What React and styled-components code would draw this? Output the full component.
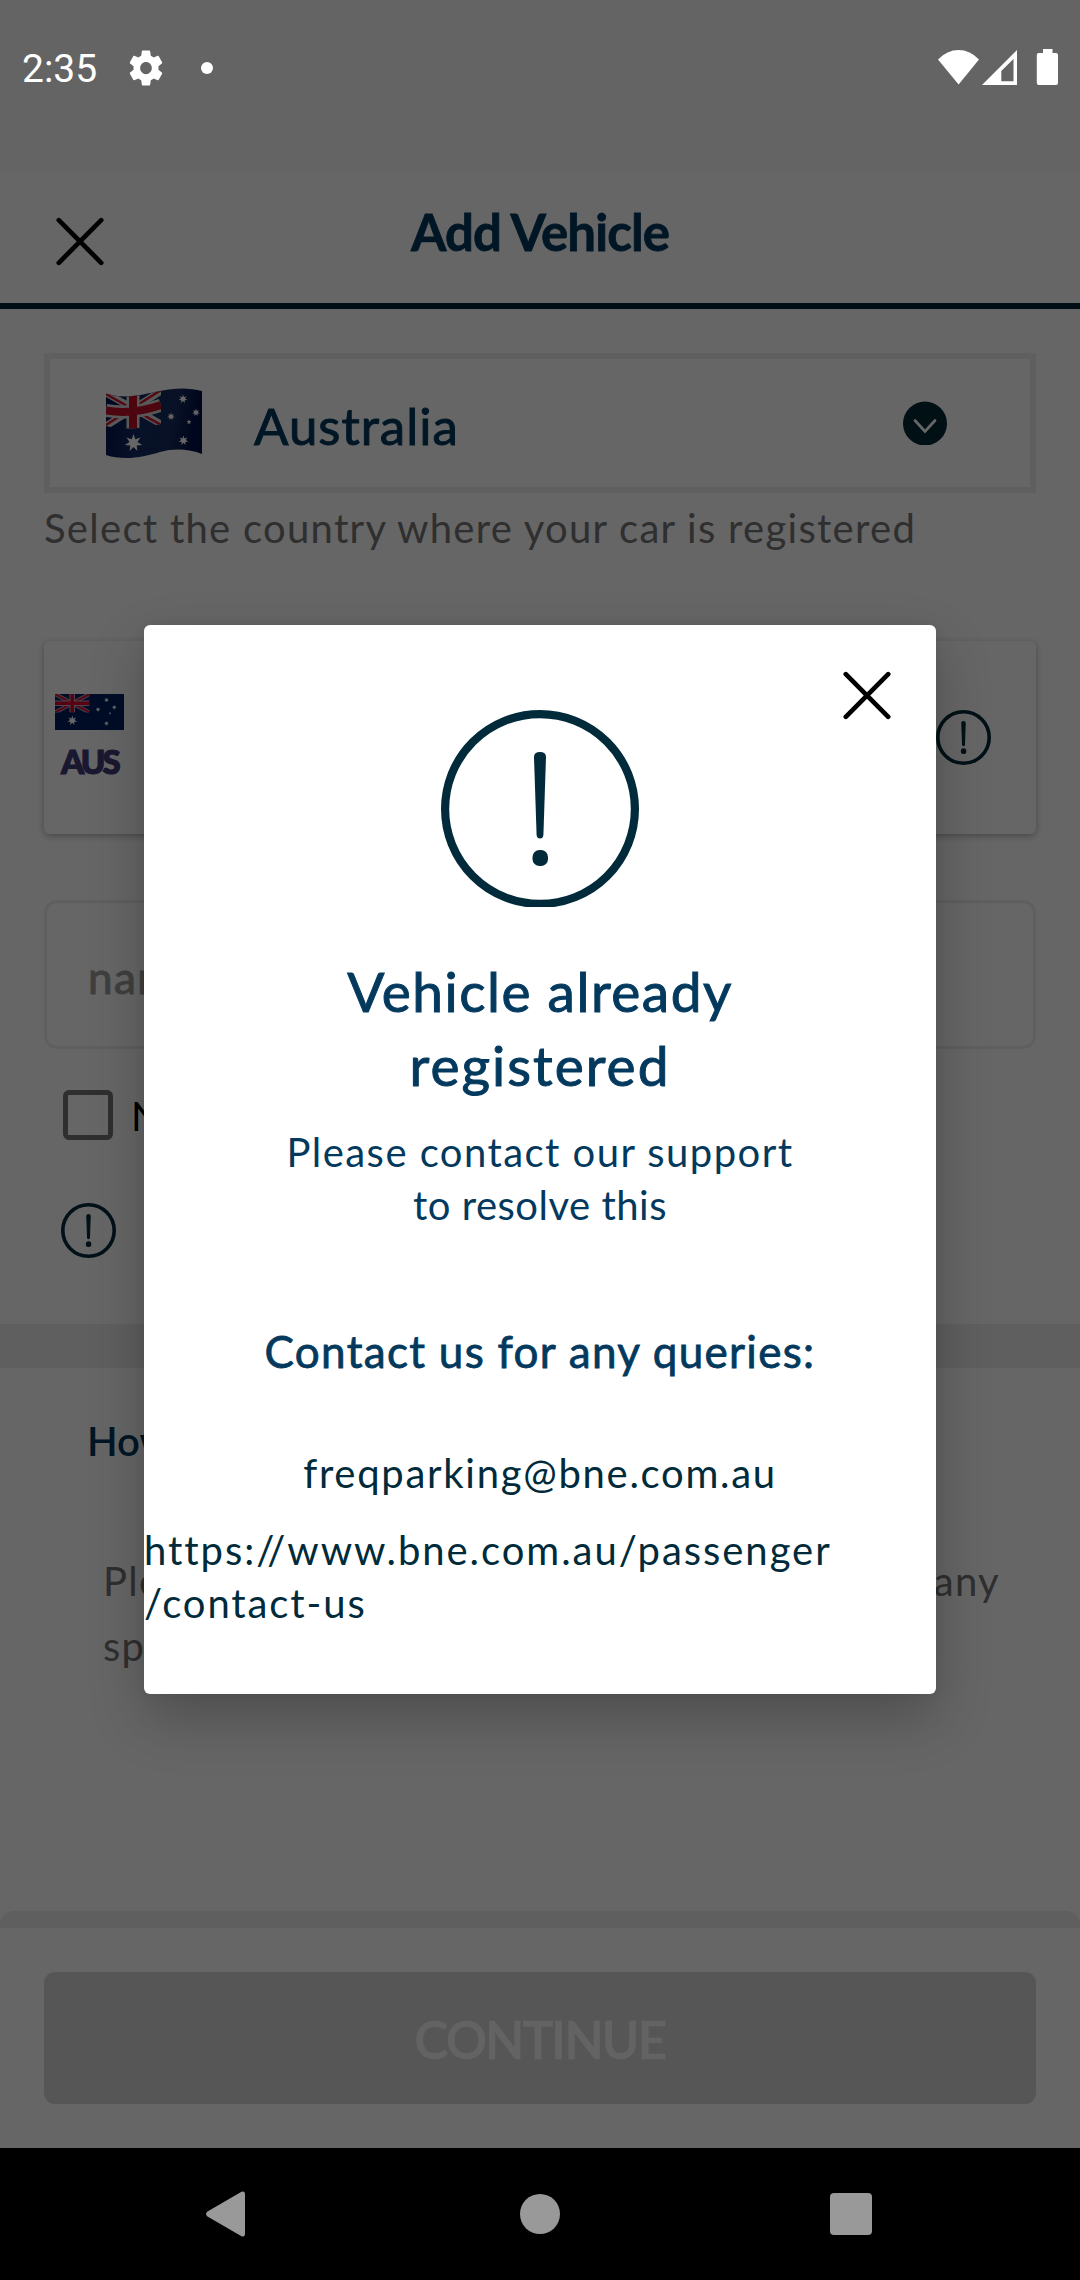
import React from "react";
import styled, { createGlobalStyle } from "styled-components";

const navy = "#04395e";
const ink = "#012b3a";
const line = "#eeeeee";
const muted = "#757575";

const GlobalStyle = createGlobalStyle`
  * { box-sizing: border-box; }
  body { margin: 0; background: #666; }
`;

const Text = styled.span`
  display: block;
  font-family: Lato, "Liberation Sans", sans-serif;
  font-size: ${(p) => p.$size || 40}px;
  font-weight: ${(p) => p.$weight || 400};
  line-height: ${(p) => p.$leading || 50}px;
  letter-spacing: ${(p) => p.$track || 0}px;
  -webkit-text-stroke: ${(p) => p.$stroke || 0}px;
  color: ${(p) => p.$color || navy};
  white-space: nowrap;
`;

const Screen = styled.div`
  position: relative;
  display: flex;
  flex-direction: column;
  width: 1080px;
  height: 2280px;
  overflow: hidden;
  background: #fff;
`;

const StatusBar = styled.header`
  display: flex;
  align-items: flex-start;
  height: 171px;
  padding: 49px 22px 0;
  background: #fafafa;
`;

const StatusIcons = styled.div`
  position: relative;
  z-index: 3;
  display: flex;
  flex: 1;
  align-items: center;
  height: 37px;
`;

const Clock = styled.span`
  width: 104px;
  padding-top: 4px;
  font: 400 39px/37px Roboto, sans-serif;
  color: #fff;
`;

const Dot = styled.i`
  width: 12px;
  height: 12px;
  margin-left: 35px;
  border-radius: 50%;
  background: #fff;
`;

const Signals = styled.svg`
  margin-left: auto;
`;

const TitleBar = styled.div`
  display: grid;
  grid-template-columns: 160px 1fr 160px;
  height: 138px;
  border-bottom: 6px solid #002639;
`;

const CloseSlot = styled.div`
  padding: 46px 0 0 56px;
`;

const TitleSlot = styled.div`
  display: flex;
  justify-content: center;
  padding-top: 31px;
`;

const Form = styled.main`
  display: flex;
  flex-direction: column;
  padding: 44px 44px 0;
`;

const CountrySelect = styled.div`
  display: flex;
  align-items: center;
  height: 140px;
  margin-bottom: 10px;
  padding: 0 83px 0 56px;
  border: 6px solid ${line};
`;

const CountryName = styled(Text)`
  flex: 1;
  margin: 6px 0 0 52px;
`;

const PlateCard = styled.div`
  display: flex;
  align-items: center;
  justify-content: space-between;
  height: 193px;
  margin-top: 88px;
  padding: 0 45px 0 11px;
  border-radius: 6px;
  box-shadow: 0 2px 7px rgba(0, 0, 0, 0.3);
`;

const PlateOrigin = styled.div`
  display: flex;
  flex-direction: column;
  align-items: center;
  gap: 14px;
  margin-top: -4px;
`;

const NameField = styled.div`
  display: flex;
  align-items: center;
  height: 149px;
  margin-top: 66px;
  padding: 4px 41px 0;
  border: 3px solid ${line};
  border-radius: 13px;
`;

const CheckRow = styled.div`
  display: flex;
  align-items: center;
  gap: 18px;
  height: 50px;
  margin: 41px 0 0 19px;
`;

const CheckBox = styled.i`
  width: 50px;
  height: 50px;
  border: 5.5px solid ${muted};
  border-radius: 6px;
`;

const CheckLabel = styled(Text)`
  padding-top: 2px;
`;

const NoticeRow = styled.div`
  display: flex;
  margin: 63px 0 66px 17px;
`;

const Band = styled.div`
  height: 44px;
  background: ${line};
`;

const Help = styled.section`
  padding: 48px 80px 0 87px;
`;

const HelpBody = styled.div`
  margin: 83px 0 0 16px;
`;

const HelpLine = styled.div`
  display: flex;
  justify-content: space-between;
`;

const Footer = styled.footer`
  height: 237px;
  margin-top: auto;
  padding: 44px 44px 0;
  border-top: 17px solid ${line};
  border-radius: 14px 14px 0 0;
`;

const ContinueButton = styled.div`
  display: flex;
  align-items: center;
  justify-content: center;
  height: 132px;
  padding-top: 4px;
  border-radius: 11px;
  background: #d8d8d8;
`;

const NavBar = styled.nav`
  position: relative;
  z-index: 3;
  display: grid;
  grid-template-columns: 40px 40px 42px;
  align-items: center;
  justify-content: start;
  column-gap: 275px;
  height: 132px;
  padding-left: 205px;
  background: #000;
`;

const RecentsSlot = styled.div`
  margin-left: -5px;
  line-height: 0;
`;

const Scrim = styled.div`
  position: absolute;
  inset: 0;
  z-index: 2;
  display: flex;
  align-items: center;
  justify-content: center;
  padding: 171px 0 132px;
  background: rgba(0, 0, 0, 0.6);
`;

const Dialog = styled.div`
  position: relative;
  display: flex;
  flex-direction: column;
  align-items: center;
  width: 792px;
  height: 1069px;
  padding-top: 85px;
  border-radius: 6px;
  background: #fff;
  text-align: center;
  box-shadow: 0 24px 56px rgba(0, 0, 0, 0.24), 0 0 12px rgba(0, 0, 0, 0.05);
`;

const DialogClose = styled.div`
  position: absolute;
  top: 46px;
  right: 45px;
  line-height: 0;
`;

const Block = styled.div`
  margin-top: ${(p) => p.$top}px;
`;

const LinkBlock = styled(Block)`
  align-self: flex-start;
  text-align: left;
`;

const CloseIcon = () => (
  <svg width="48" height="49" viewBox="0 0 48 49" stroke="#000" strokeWidth="4.700" strokeLinecap="round">
    <path d="M2.8 3.2 45.2 45.8M45.2 3.2 2.8 45.8" />
  </svg>
);

const AlertIcon = ({ width = 55, height = 55, ring = 8.2, boost = 0 }) => (
  <svg width={width} height={height} viewBox={`0 0 198 ${(198 * height) / width}`} fill={ink}>
    <circle cx="99" cy="99" r={99 - ring / 2} fill="none" stroke={ink} strokeWidth={ring} />
    <path
      d="M93 47q0-5 6-5t6 5l-2.6 78q-.4 3.500-3.400 3.500t-3.400-3.500z"
      stroke={ink}
      strokeWidth={boost}
    />
    <rect x="91.500" y="140" width="15.500" height="16" rx="7" stroke={ink} strokeWidth={boost} />
  </svg>
);

const star = (cx, cy, r, points = 7) =>
  Array.from({ length: points * 2 }, (_, i) => {
    const a = (Math.PI * i) / points - Math.PI / 2;
    const d = i % 2 ? r * 0.45 : r;
    return `${(cx + d * Math.cos(a)).toFixed(2)},${(cy + d * Math.sin(a)).toFixed(2)}`;
  }).join(" ");

const Star = ({ at }) => <polygon points={star(...at)} fill="#fff" />;

const WavingFlag = () => (
  <svg width="96" height="71" viewBox="0 0 96 71">
    <defs>
      <clipPath id="wave">
        <path d="M0 5.500C20 12 38 6 54 3 68-.5 84-.5 96 3V66C84 61 68 60 54 64 38 69 18 73 0 67Z" />
      </clipPath>
      <clipPath id="waveCanton">
        <path d="M0 5.500C20 12 38 6 55 2.800V36C38 40 18 43 0 38Z" />
      </clipPath>
      <linearGradient id="waveShade" x1="0" x2="1" y1="0" y2="0.150">
        <stop offset="0" stopColor="#001250" />
        <stop offset="0.450" stopColor="#132c62" />
        <stop offset="0.750" stopColor="#142b5e" />
        <stop offset="1" stopColor="#001048" />
      </linearGradient>
    </defs>
    <g clipPath="url(#wave)">
      <rect width="96" height="71" fill="url(#waveShade)" />
      <g clipPath="url(#waveCanton)">
        <path d="M0 5 55 36M0 38 55 3" stroke="#dcdcdc" strokeWidth="7" />
        <path d="M0 6 55 37M0 37 55 2" stroke="#d01830" strokeWidth="2.400" />
        <path d="M27 0V43M0 22.500Q27 27 55 17" stroke="#dcdcdc" strokeWidth="13" fill="none" />
        <path d="M27 0V43M0 22.500Q27 27 55 17" stroke="#c01028" strokeWidth="8" fill="none" />
      </g>
      <Star at={[27.5, 55, 9]} />
      <Star at={[77, 11, 4.5]} />
      <Star at={[65, 28.5, 4]} />
      <Star at={[90, 24.5, 4]} />
      <Star at={[83, 34, 2.5, 5]} />
      <Star at={[77.5, 52.5, 5]} />
    </g>
  </svg>
);

const FlatFlag = () => (
  <svg width="69" height="36" viewBox="0 0 69 36">
    <rect width="69" height="36" fill="#002060" />
    <svg width="34.500" height="18.500" viewBox="0 0 34.500 18.500">
      <path d="M0 0 34.500 18.500M0 18.500 34.500 0" stroke="#a8a8c8" strokeWidth="4" />
      <path d="M0 0 34.500 18.500M0 18.500 34.500 0" stroke="#d8102c" strokeWidth="2" />
      <path d="M17.250 0V18.500M0 9.200H34.500" stroke="#b8b0cc" strokeWidth="5.600" />
      <path d="M17.250 0V18.500M0 9.200H34.500" stroke="#d8002c" strokeWidth="3.600" />
    </svg>
    <Star at={[17.3, 26.5, 5]} />
    <Star at={[51.5, 6, 2.4]} />
    <Star at={[43, 15.5, 2.4]} />
    <Star at={[59.3, 13.3, 2.4]} />
    <Star at={[55, 19.3, 1.3, 5]} />
    <Star at={[51.5, 29.5, 2.4]} />
  </svg>
);

const ChevronBadge = () => (
  <svg width="44" height="44" viewBox="0 0 44 44">
    <circle cx="22" cy="22.500" r="22" fill="#002833" />
    <path d="M12 19.500 22 30.500 32 19.500" fill="none" stroke="#fff" strokeWidth="2.800" strokeLinecap="round" />
  </svg>
);

const Gear = () => (
  <svg width="40" height="42" viewBox="0 0 24 24" preserveAspectRatio="none" fill="#fff">
    <path d="M19.430 12.980c.04-.32.070-.640.070-.980s-.030-.660-.070-.980l2.110-1.650c.190-.150.240-.420.120-.640l-2-3.460c-.120-.220-.390-.3-.610-.220l-2.490 1c-.520-.4-1.080-.730-1.690-.980l-.380-2.650C14.460 2.180 14.250 2 14 2h-4c-.250 0-.460.180-.490.420l-.380 2.650c-.610.250-1.170.590-1.690.980l-2.490-1c-.230-.090-.490 0-.610.220l-2 3.460c-.130.220-.070.490.120.640l2.110 1.650c-.040.320-.070.650-.070.980s.030.660.070.980l-2.110 1.650c-.190.150-.240.420-.120.640l2 3.460c.120.220.390.3.610.220l2.490-1c.520.4 1.080.730 1.690.980l.380 2.650c.030.240.240.420.490.420h4c.250 0 .460-.180.490-.420l.380-2.650c.610-.250 1.170-.590 1.690-.980l2.490 1c.230.090.490 0 .610-.220l2-3.460c.120-.220.070-.490-.120-.640l-2.110-1.650zM12 15.500c-1.930 0-3.500-1.570-3.500-3.500s1.570-3.500 3.500-3.500 3.500 1.570 3.500 3.500-1.570 3.500-3.500 3.500z" />
  </svg>
);

export default function App() {
  return (
    <Screen>
      <GlobalStyle />
      <StatusBar>
        <StatusIcons>
          <Clock>2:35</Clock>
          <Gear />
          <Dot />
          <Signals width="120" height="37" viewBox="938 49 120 37" fill="#fff">
            <path d="M938 59.500Q947 50 958.600 50T979 59.500L958.600 84.500Z" />
            <path fillRule="evenodd" d="M982 85 1017 50V85ZM1001.300 71V81.300H1013.500V59Z" />
            <path d="M1043 49h9.500v4h3.500q2 0 2 2v28q0 2-2 2h-17.200q-2 0-2-2V55q0-2 2-2h4.200z" />
          </Signals>
        </StatusIcons>
      </StatusBar>

      <TitleBar>
        <CloseSlot><CloseIcon /></CloseSlot>
        <TitleSlot>
          <Text $size={51} $weight={700} $leading={60} $track={-0.9} $stroke={0.8}>Add Vehicle</Text>
        </TitleSlot>
      </TitleBar>

      <Form>
        <CountrySelect>
          <WavingFlag />
          <CountryName $size={51} $leading={60} $track={1} $stroke={1}>Australia</CountryName>
          <ChevronBadge />
        </CountrySelect>
        <Text $color={muted} $track={1.28}>Select the country where your car is registered</Text>
        <PlateCard>
          <PlateOrigin>
            <FlatFlag />
            <Text $size={33} $weight={900} $leading={34} $track={-2.8} $stroke={1.2} $color="#413a78">AUS</Text>
          </PlateOrigin>
          <AlertIcon ring={13} boost={4} />
        </PlateCard>
        <NameField><Text $size={44} $color="#9e9e9e" $track={1.4} $stroke={1}>name</Text></NameField>
        <CheckRow><CheckBox /><CheckLabel $color="#000">N</CheckLabel></CheckRow>
        <NoticeRow><AlertIcon ring={13} boost={4} /></NoticeRow>
      </Form>
      <Band />
      <Help>
        <Text $weight={600}>How</Text>
        <HelpBody>
          <HelpLine>
            <Text $leading={65} $track={1.3} $color={muted}>Please</Text>
            <Text $leading={65} $track={1.3} $color={muted}>any</Text>
          </HelpLine>
          <Text $leading={65} $track={1.3} $color={muted}>sp</Text>
        </HelpBody>
      </Help>

      <Footer>
        <ContinueButton>
          <Text $size={51} $weight={600} $leading={60} $track={-1.7} $stroke={0.6} $color="#f8f8f8">CONTINUE</Text>
        </ContinueButton>
      </Footer>

      <NavBar>
        <svg width="40" height="46" viewBox="0 0 40 46" fill="#999">
          <path d="M36.500.8Q40-.6 40 3.500V42.500Q40 46.600 36.500 45.200L2.500 25.500Q-.5 23 2.500 20.500Z" />
        </svg>
        <svg width="40" height="40"><circle cx="20" cy="20" r="20" fill="#999" /></svg>
        <RecentsSlot>
          <svg width="42" height="42"><rect width="42" height="42" rx="4" fill="#999" /></svg>
        </RecentsSlot>
      </NavBar>

      <Scrim>
        <Dialog>
          <DialogClose><CloseIcon /></DialogClose>
          <AlertIcon width={198} height={197} />
          <Block $top={47}>
            <Text $size={55} $leading={74} $track={1.5} $stroke={1}>Vehicle already</Text>
            <Text $size={55} $leading={74} $track={2} $stroke={1}>registered</Text>
          </Block>
          <Block $top={24}>
            <Text $leading={53} $track={1.45}>Please contact our support</Text>
            <Text $leading={53} $track={0.5}>to resolve this</Text>
          </Block>
          <Block $top={92}>
            <Text $size={44} $leading={54} $track={1.3} $stroke={0.8}>Contact us for any queries:</Text>
          </Block>
          <Block $top={69}>
            <Text $leading={53} $track={1.72} $color={ink}>freqparking@bne.com.au</Text>
          </Block>
          <LinkBlock $top={24}>
            <Text $leading={53} $track={1.95} $color={ink}>https://www.bne.com.au/passenger</Text>
            <Text $leading={53} $track={1.9} $color={ink}>/contact-us</Text>
          </LinkBlock>
        </Dialog>
      </Scrim>
    </Screen>
  );
}
